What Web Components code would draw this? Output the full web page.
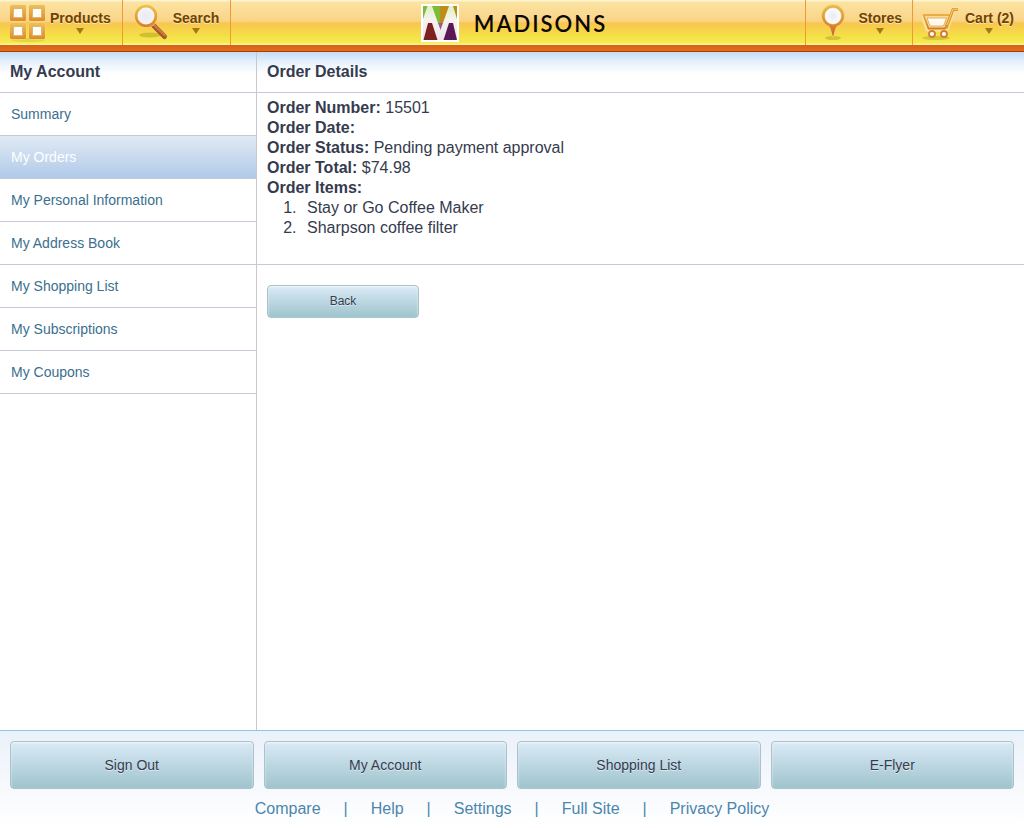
<!DOCTYPE html>
<html lang="en">
<head>
<meta charset="utf-8">
<title>Madisons - Order Details</title>
<style>
  html, body { margin: 0; height: 100%; }
  body { font: 16px/20px "Liberation Sans", Arial, sans-serif; color: #353b4e; background: #fff; }
</style>
</head>
<body>
<store-app></store-app>
<script>
const define = (name, html) => {
  const t = document.createElement('template');
  t.innerHTML = html;
  customElements.define(name, class extends HTMLElement {
    constructor() {
      super();
      this.attachShadow({ mode: 'open' }).append(t.content.cloneNode(true));
    }
  });
};

define('icon-grid', `
<style>:host{display:block;width:38px;height:40px}svg{display:block}</style>
<svg width="38" height="40" viewBox="0 0 38 40" aria-hidden="true">
  <defs>
    <linearGradient id="g" x1="0" y1="0" x2="0" y2="1"><stop offset="0" stop-color="#eec05a"/><stop offset="1" stop-color="#df8b2c"/></linearGradient>
    <g id="t"><rect x="-.5" y="-.5" width="17" height="17" rx="2" fill="#fbe08a" opacity=".7"/><rect width="16" height="16" rx="1.5" fill="url(#g)"/><rect x="3.5" y="3.5" width="9" height="9" fill="#fffdf4" stroke="#d9b877"/></g>
  </defs>
  <ellipse cx="18" cy="37" rx="17" ry="2" fill="#b5a11c" opacity=".25"/>
  <use href="#t" x="0" y="2"/><use href="#t" x="19" y="2"/><use href="#t" x="0" y="20"/><use href="#t" x="19" y="20"/>
</svg>`);

define('icon-search', `
<style>:host{display:block;width:38px;height:40px}svg{display:block}</style>
<svg width="38" height="40" viewBox="0 0 38 40" aria-hidden="true">
  <defs>
    <linearGradient id="g" x1="0" y1="0" x2="0" y2="1"><stop offset="0" stop-color="#ecc247"/><stop offset="1" stop-color="#dc8424"/></linearGradient>
    <radialGradient id="l"><stop offset="0" stop-color="#e9eaf0"/><stop offset=".7" stop-color="#f2f2f6"/><stop offset="1" stop-color="#fff"/></radialGradient>
  </defs>
  <ellipse cx="17" cy="32" rx="11" ry="2.5" fill="#9c9410" opacity=".4"/>
  <path d="M20 22l11.500 11.500" stroke="#a9582c" stroke-width="5" stroke-linecap="round"/>
  <path d="M20 21l12 11.500" stroke="#cf7b42" stroke-width="2" stroke-linecap="round"/>
  <circle cx="13" cy="13" r="10" fill="url(#l)" stroke="url(#g)" stroke-width="3"/>
  <circle cx="13" cy="13" r="11.800" fill="none" stroke="#fbe7a0" stroke-width=".6"/>
</svg>`);

define('icon-pin', `
<style>:host{display:block;width:38px;height:40px}svg{display:block}</style>
<svg width="38" height="40" viewBox="0 0 38 40" aria-hidden="true">
  <defs>
    <linearGradient id="g" x1="0" y1="0" x2="0" y2="1"><stop offset="0" stop-color="#ebbe43"/><stop offset=".6" stop-color="#dd8a2b"/><stop offset="1" stop-color="#c65a22"/></linearGradient>
    <radialGradient id="l"><stop offset="0" stop-color="#e9eaf0"/><stop offset="1" stop-color="#fff"/></radialGradient>
  </defs>
  <ellipse cx="18" cy="35" rx="8" ry="2" fill="#9c9410" opacity=".4"/>
  <path d="M18 1.500a11.500 11.500 0 0 1 11.500 11.500c0 5-3.500 9-7.500 10.500C20 26 19.500 31 18 34.500c-1.500-3.500-2-8.500-4-11C10 22 6.500 18 6.500 13A11.500 11.500 0 0 1 18 1.500z" fill="url(#g)" stroke="#fbe08a" stroke-width=".6"/>
  <circle cx="18" cy="13" r="8.500" fill="url(#l)" stroke="#d39a48" stroke-width=".5"/>
</svg>`);

define('icon-cart', `
<style>:host{display:block;width:38px;height:40px}svg{display:block}</style>
<svg width="38" height="40" viewBox="0 0 38 40" aria-hidden="true">
  <defs>
    <linearGradient id="g" x1="0" y1="0" x2="0" y2="1"><stop offset="0" stop-color="#e9ae45"/><stop offset="1" stop-color="#d67c27"/></linearGradient>
  </defs>
  <ellipse cx="14" cy="35" rx="14" ry="2" fill="#9c9410" opacity=".35"/>
  <path d="M1 12L6 26H24L31 6H36" fill="none" stroke="#fbe39c" stroke-width="5.500" stroke-linejoin="round"/>
  <path d="M1.500 12H28L23 25.500H6.500z" fill="#fbdc92" stroke="url(#g)" stroke-width="1.800" stroke-linejoin="round"/>
  <path d="M5 15H24.500L21.500 23H8z" fill="#fffaf0" stroke="#e0a24c" stroke-width=".8"/>
  <path d="M24 25.500L31 6.500H36" fill="none" stroke="#dc9831" stroke-width="3" stroke-linejoin="round"/>
  <path d="M25 22L31 6.200H36" fill="none" stroke="#f6cf72" stroke-width="1"/>
  <circle cx="10" cy="31" r="3" fill="#fff" stroke="#cf7d31" stroke-width="1.800"/>
  <circle cx="22" cy="31" r="3" fill="#fff" stroke="#cf7d31" stroke-width="1.800"/>
</svg>`);

define('nav-button', `
<style>
  :host{display:block;box-sizing:border-box;height:45px;border:0 solid #f19a35}
  :host([side=left]){border-right-width:1px}
  :host([side=right]){border-left-width:1px}
  button{all:unset;box-sizing:border-box;display:flex;height:45px;cursor:pointer;color:#714206;font-weight:bold;font-size:14px;line-height:18px;white-space:nowrap}
  :host([side=left]) button{gap:2px;padding:3px 11px 0 10px}
  :host([side=right]) button{gap:5px;padding:3px 10px 0 9px}
  .label{display:flex;flex-direction:column;align-items:center;gap:1px;padding-top:6px;text-shadow:0 1px 0 #fbe7a6}
  i{border:4px solid transparent;border-top:6px solid #a27a14;border-bottom:0}
</style>
<button type="button"><slot name="icon"></slot><span class="label"><slot></slot><i></i></span></button>`);

define('brand-logo', `
<style>
  :host{display:block}
  a{display:flex;align-items:center;gap:15px;color:#0b0804;text-decoration:none;font:600 22px/28px Lato,sans-serif;letter-spacing:2px}
  svg{display:block}
  span{padding-top:1px}
</style>
<a href="#home">
  <svg width="38" height="38" viewBox="0 0 38 38" aria-hidden="true">
    <defs><linearGradient id="m" x1="0" y1="0" x2="0" y2="1"><stop offset="0" stop-color="#dff0c4"/><stop offset=".4" stop-color="#f7f3ee"/><stop offset="1" stop-color="#efe6ee"/></linearGradient></defs>
    <path fill="#fff" d="M0 0h38v38H0z"/>
    <path fill="#7dbb38" d="M2 2h17v17H2z"/><path fill="#bd8d18" d="M19 2h17v17H19z"/>
    <path fill="#9c5a86" d="M2 19h34v17H2z"/>
    <path fill="url(#m)" d="M2 36V15L6.500 2H11L19.500 26 28 2h4l4 13v21z"/>
    <path fill="#7c2120" d="M7 19h4l5.500 17H2.500z"/><path fill="#5b1856" d="M28 19h4l4 17H22.500z"/>
  </svg>
  <span>MADISONS</span>
</a>`);

define('store-header', `
<style>
  :host{display:block;height:52px;flex:none;box-sizing:border-box;border-bottom:1px solid #a53c06;background:#e2691b}
  header{display:grid;grid-template-columns:1fr auto 1fr;height:45px;background:linear-gradient(#fdf6d8 0,#fdf3cb 1px,#fbe3a2 2px,#fad487 21px,#f8c650 23px,#f5dc48 34px,#f4ec4e 43px,#fbf3a0 44px)}
  .bar{height:6px;background:linear-gradient(#d3631b,#e66b1b)}
  nav{display:flex}
  .end{justify-content:flex-end}
  brand-logo{align-self:start;padding:4px 0 0 4px}
</style>
<header>
  <nav aria-label="Catalog">
    <nav-button side="left"><icon-grid slot="icon"></icon-grid>Products</nav-button>
    <nav-button side="left"><icon-search slot="icon"></icon-search>Search</nav-button>
  </nav>
  <brand-logo></brand-logo>
  <nav class="end" aria-label="Shop">
    <nav-button side="right"><icon-pin slot="icon"></icon-pin>Stores</nav-button>
    <nav-button side="right"><icon-cart slot="icon"></icon-cart>Cart (2)</nav-button>
  </nav>
</header>
<div class="bar"></div>`);

define('panel-title', `
<style>
  :host{display:block;border-bottom:1px solid #c3cbd8;background:linear-gradient(#c3dcf4,#e6f1fc 10px,#fff 22px)}
  h2{margin:0;padding:10px;font-size:16px;line-height:20px}
</style>
<h2><slot></slot></h2>`);

define('side-link', `
<style>
  :host{display:block;border-bottom:1px solid #c3cbd8}
  a{display:block;padding:11px;font-size:14px;line-height:20px;color:#3a6f8f;text-decoration:none}
  :host([current]) a{color:#fff;background:linear-gradient(#e1eaf4,#b0cae9)}
</style>
<a href="#account"><slot></slot></a>`);

define('account-nav', `
<style>:host{display:block;flex:none;width:25%;border-right:1px solid #c8c8cc}</style>
<panel-title>My Account</panel-title>
<nav aria-label="My Account">
  <side-link>Summary</side-link>
  <side-link current>My Orders</side-link>
  <side-link>My Personal Information</side-link>
  <side-link>My Address Book</side-link>
  <side-link>My Shopping List</side-link>
  <side-link>My Subscriptions</side-link>
  <side-link>My Coupons</side-link>
</nav>`);

define('gloss-button', `
<style>
  :host{display:block}
  button{display:block;box-sizing:border-box;width:100%;margin:0;padding:6px 10px;font:12px/19px "Liberation Sans",Arial,sans-serif;color:#353b4e;border:1px solid #a9c3c9;border-radius:4px;background:linear-gradient(#daeaf6,#9fc4cd);box-shadow:inset 0 1px 2px #f0f8fb;text-shadow:0 1px 0 #dcebf2;cursor:pointer}
  :host([large]) button{padding:13px 10px;font-size:14px;line-height:20px}
</style>
<button type="button"><slot></slot></button>`);

define('order-details', `
<style>
  :host{display:block;flex:1;min-width:0}
  .info{padding:5px 10px 26px;border-bottom:1px solid #c3cbd8}
  p{margin:0}
  ol{margin:0;padding-left:34px}
  li{padding-left:6px}
  gloss-button{width:152px;margin:20px 10px}
</style>
<panel-title>Order Details</panel-title>
<section class="info">
  <p><b>Order Number:</b> 15501</p>
  <p><b>Order Date:</b></p>
  <p><b>Order Status:</b> Pending payment approval</p>
  <p><b>Order Total:</b> $74.98</p>
  <p><b>Order Items:</b></p>
  <ol><li>Stay or Go Coffee Maker</li><li>Sharpson coffee filter</li></ol>
</section>
<gloss-button>Back</gloss-button>`);

define('store-footer', `
<style>
  :host{display:block;flex:none;border-top:1px solid #8cc6ea;background:linear-gradient(#ebf1fa,#fff)}
  .actions{display:grid;grid-template-columns:repeat(4,1fr);gap:10px;padding:10px}
  nav{display:flex;justify-content:center;gap:23px;padding-bottom:9px;color:#4a86ad}
  a{color:inherit;text-decoration:none}
</style>
<footer>
  <div class="actions">
    <gloss-button large>Sign Out</gloss-button>
    <gloss-button large>My Account</gloss-button>
    <gloss-button large>Shopping List</gloss-button>
    <gloss-button large>E-Flyer</gloss-button>
  </div>
  <nav aria-label="Footer">
    <a href="#compare">Compare</a><span>|</span>
    <a href="#help">Help</a><span>|</span>
    <a href="#settings">Settings</a><span>|</span>
    <a href="#full">Full Site</a><span>|</span>
    <a href="#privacy">Privacy Policy</a>
  </nav>
</footer>`);

define('store-app', `
<style>
  :host{display:flex;flex-direction:column;min-height:100vh}
  main{display:flex;flex:1}
</style>
<store-header></store-header>
<main><account-nav></account-nav><order-details></order-details></main>
<store-footer></store-footer>`);
</script>
</body>
</html>
